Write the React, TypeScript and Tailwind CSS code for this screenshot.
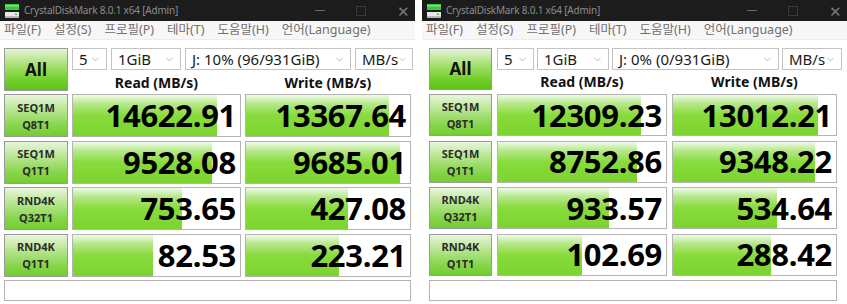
import React from 'react';
import { ChevronDown } from 'lucide-react';

// Kelas tata letak per jendela (ditulis lengkap supaya Tailwind membacanya)
interface Layout {
    win: string;
    grid: string;
    selects: string[];
    selGap: string;
}

interface Result {
    name: string;
    sub: string;
    read: string;
    write: string;
    readPct: number;
    writePct: number;
}

interface Bench {
    drive: string;
    layout: Layout;
    rows: Result[];
}

const benches: Bench[] = [
    {
        drive: 'J: 10% (96/931GiB)',
        layout: {
            win: 'w-[415px]',
            grid: 'pl-[4px] grid-cols-[64px_169px_166px] grid-rows-[22px_17px_43px_43px_43px_43px_21px] gap-x-[4px] gap-y-[3.5px]',
            selects: ['w-[35px]', 'w-[70px]', 'w-[166px]', 'w-[58px]'],
            selGap: 'gap-[4px]',
        },
        rows: [
            { name: 'SEQ1M', sub: 'Q8T1', read: '14622.91', write: '13367.64', readPct: 86, writePct: 87 },
            { name: 'SEQ1M', sub: 'Q1T1', read: '9528.08', write: '9685.01', readPct: 83, writePct: 94 },
            { name: 'RND4K', sub: 'Q32T1', read: '753.65', write: '427.08', readPct: 65, writePct: 62 },
            { name: 'RND4K', sub: 'Q1T1', read: '82.53', write: '223.21', readPct: 48, writePct: 57 },
        ],
    },
    {
        drive: 'J: 0% (0/931GiB)',
        layout: {
            win: 'w-[425px]',
            grid: 'pl-[7px] grid-cols-[63px_170px_165px] grid-rows-[22px_15px_42px_42px_42px_42px_21px] gap-x-[5px] gap-y-[4.5px]',
            selects: ['w-[37px]', 'w-[72px]', 'w-[167px]', 'w-[60px]'],
            selGap: 'gap-[3px]',
        },
        rows: [
            { name: 'SEQ1M', sub: 'Q8T1', read: '12309.23', write: '13012.21', readPct: 85, writePct: 89 },
            { name: 'SEQ1M', sub: 'Q1T1', read: '8752.86', write: '9348.22', readPct: 83, writePct: 87 },
            { name: 'RND4K', sub: 'Q32T1', read: '933.57', write: '534.64', readPct: 66, writePct: 64 },
            { name: 'RND4K', sub: 'Q1T1', read: '102.69', write: '288.42', readPct: 50, writePct: 60 },
        ],
    },
];

const menuItems = ['파일(F)', '설정(S)', '프로필(P)', '테마(T)', '도움말(H)', '언어(Language)'];

const AppIcon = () => (
    <svg width="16" height="16" viewBox="0 0 16 16">
        <rect x="1" y="1" width="14" height="6" fill="#3cc83c" />
        <rect x="1" y="2" width="14" height="1.5" fill="#7fe07f" />
        <rect x="1" y="9" width="14" height="6" fill="#e8e8e8" />
        <rect x="1" y="13" width="14" height="2" fill="#b8b8b8" />
        <rect x="11" y="10.5" width="2" height="1.5" fill="#3cc83c" />
    </svg>
);

const ValueCell = ({ value, pct }: { value: string; pct: number }) => (
    <div className="relative border border-[#b4b4b4] bg-white overflow-hidden">
        <div
            className="absolute left-0 top-0 bottom-0 bg-[linear-gradient(to_bottom,#f0fae8_0%,#b5e889_22%,#88db3c_50%,#7cd42e_100%)]"
            style={{ width: `${pct}%` }}
        />
        <div className="relative h-full flex items-center justify-end pr-[4px] text-[31px] font-bold text-black leading-none tracking-[-0.3px]">
            {value}
        </div>
    </div>
);

const Window = ({ bench }: { bench: Bench }) => {
    const l = bench.layout;
    const selTexts = ['5', '1GiB', bench.drive, 'MB/s'];
    return (
        <div className={`flex flex-col bg-white shrink-0 ${l.win}`}>
            {/* title bar */}
            <div className="h-[21px] bg-[#1c1c1c] flex items-center pl-[4px] pr-[8px]">
                <AppIcon />
                <span className="ml-[4px] text-[10px] tracking-[-0.2px] text-[#8c8c8c]">CrystalDiskMark 8.0.1 x64 [Admin]</span>
                <div className="ml-auto flex items-center gap-[31px]">
                    <div className="w-[10px] h-[1px] bg-[#6e6e6e]" />
                    <div className="w-[10px] h-[10px] border border-[#3a3a3a]" />
                    <div className="w-[10px] text-[15px] leading-[18px] text-[#7a7a7a]">✕</div>
                </div>
            </div>
            {/* menu bar */}
            <div className="h-[19px] pl-[4px] bg-[#f7f7f7] flex items-center gap-[13px] text-[12.5px] text-[#707070] border-b border-[#ececec]">
                {menuItems.map(m => <span key={m}>{m}</span>)}
            </div>
            {/* body */}
            <div className={`grid pt-[8px] ${l.grid}`}>
                <div className="row-span-2 border border-[#9a9a9a] bg-[linear-gradient(to_bottom,#e4f5d8_0%,#a6e070_40%,#6ccd22_80%,#5cc418_100%)] flex items-center justify-center text-[17px] font-bold text-[#111]">
                    All
                </div>
                <div className={`col-span-2 flex ${l.selGap}`}>
                    {selTexts.map((t, i) => (
                        <div
                            key={i}
                            className={`h-[22px] shrink-0 border border-[#c4c4c4] bg-white flex items-center justify-between pl-[6px] pr-[5px] text-[15px] text-[#1a1a1a] ${l.selects[i]}`}
                        >
                            <span className="leading-none">{t}</span>
                            <ChevronDown size={11} strokeWidth={1.5} className="text-[#999]" />
                        </div>
                    ))}
                </div>
                <div className="flex items-end justify-center text-[14px] font-bold text-[#111] leading-[16px]">Read (MB/s)</div>
                <div className="flex items-end justify-center text-[14px] font-bold text-[#111] leading-[16px]">Write (MB/s)</div>
                {bench.rows.map((r, i) => (
                    <React.Fragment key={i}>
                        <div className="border border-[#9a9a9a] bg-[linear-gradient(to_bottom,#e8f6de_0%,#b9e693_35%,#86d54a_75%,#74cd30_100%)] flex flex-col items-center justify-center text-[11px] font-bold text-[#2b2b2b] leading-[17px]">
                            <span>{r.name}</span>
                            <span>{r.sub}</span>
                        </div>
                        <ValueCell value={r.read} pct={r.readPct} />
                        <ValueCell value={r.write} pct={r.writePct} />
                    </React.Fragment>
                ))}
                <div className="col-span-3 border border-[#b4b4b4] bg-white" />
            </div>
        </div>
    );
};

export default function App() {
    return (
        <div className="w-[847px] h-[304px] bg-white flex gap-[7px] overflow-hidden font-['Noto_Sans','Noto_Sans_CJK_KR',sans-serif]">
            {benches.map((b, i) => <Window key={i} bench={b} />)}
        </div>
    );
}
